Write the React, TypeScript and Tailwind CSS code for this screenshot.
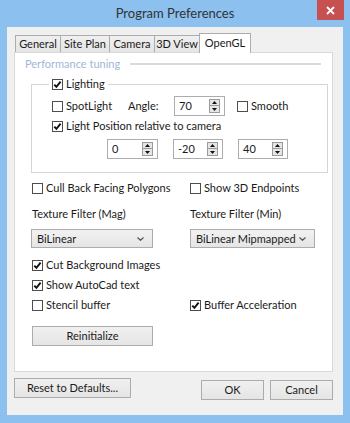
import React from 'react';

const Check = ({ checked }: { checked?: boolean }) => (
    <span className="w-[11px] h-[11px] shrink-0 border border-[#4d4d4d] bg-white flex items-center justify-center">
        {checked && (
            <svg width="9" height="9" viewBox="0 0 9 9">
                <path d="M1.3 4.6 L3.4 6.9 L7.6 1.6" fill="none" stroke="#111" strokeWidth="1.9" />
            </svg>
        )}
    </span>
);

const CheckRow = ({ label, checked, className = '' }: { label: string; checked?: boolean; className?: string }) => (
    <div className={`flex items-center gap-[3px] h-[14px] ${className}`}>
        <Check checked={checked} />
        <span className="leading-[14px] whitespace-nowrap">{label}</span>
    </div>
);

const Spin = ({ value, w }: { value: string; w: string }) => (
    <div className={`${w} h-[20px] border border-[#abadb3] bg-white flex items-center pl-[4px] pr-[4px]`}>
        <span className="flex-1 leading-[14px]">{value}</span>
        <div className="w-[11px] h-[14px] flex flex-col">
            <div className="h-[7px] border border-[#9a9a9a] bg-[#e6e6e6] flex items-center justify-center">
                <svg width="5" height="3" viewBox="0 0 5 3"><path d="M0 3 L2.5 0 L5 3 Z" fill="#111" /></svg>
            </div>
            <div className="h-[7px] border border-t-0 border-[#9a9a9a] bg-[#e6e6e6] flex items-center justify-center">
                <svg width="5" height="3" viewBox="0 0 5 3"><path d="M0 0 L2.5 3 L5 0 Z" fill="#111" /></svg>
            </div>
        </div>
    </div>
);

const Select = ({ value, w }: { value: string; w: string }) => (
    <div className={`${w} h-[19px] border border-[#acacac] bg-gradient-to-b from-[#f2f2f2] to-[#e5e5e5] flex items-center pl-[5px] pr-[8px]`}>
        <span className="flex-1 leading-[14px] whitespace-nowrap">{value}</span>
        <svg width="7" height="4" viewBox="0 0 7 4">
            <path d="M0.5 0.5 L3.5 3.3 L6.5 0.5" fill="none" stroke="#555" strokeWidth="1.2" />
        </svg>
    </div>
);

const Button = ({ label, className = '' }: { label: string; className?: string }) => (
    <div className={`h-[20px] border border-[#acacac] bg-gradient-to-b from-[#f0f0f0] to-[#e5e5e5] flex items-center justify-center leading-[14px] ${className}`}>
        {label}
    </div>
);

const tabs = [
    { name: 'General', w: 'w-[46px]' },
    { name: 'Site Plan', w: 'w-[50px]' },
    { name: 'Camera', w: 'w-[46px]' },
    { name: '3D View', w: 'w-[46px]' },
];

export default function App() {
    return (
        <div className="w-[350px] h-[423px] bg-[#8bc0ef] flex flex-col font-['Lato',sans-serif] text-[11px] text-[#1a1a1a]">
            {/* title bar */}
            <div className="h-[27px] grid grid-cols-[1fr_auto_1fr] items-start">
                <div />
                <div className="text-[13px] leading-[27px] text-[#333]">Program Preferences</div>
                <div className="justify-self-end mr-[6px] w-[27px] h-[20px] bg-[#c75050] flex items-center justify-center">
                    <svg width="9" height="9" viewBox="0 0 9 9">
                        <path d="M1 1 L8 8 M8 1 L1 8" stroke="#fff" strokeWidth="1.8" />
                    </svg>
                </div>
            </div>

            {/* client area */}
            <div className="mx-[7px] h-[388px] bg-[#f0f0f0] pl-[7px] pr-[10px] pt-[6px]">
                {/* tabs */}
                <div className="h-[19px] flex items-end pl-[1px]">
                    {tabs.map((t) => (
                        <div
                            key={t.name}
                            className={`${t.w} h-[17px] -mr-px border border-b-0 border-[#acacac] bg-gradient-to-b from-[#f0f0f0] to-[#e5e5e5] flex items-center justify-center leading-[14px] whitespace-nowrap`}
                        >
                            {t.name}
                        </div>
                    ))}
                    <div className="w-[52px] h-[20px] -mb-px relative z-10 border border-b-0 border-[#acacac] bg-white flex items-center justify-center leading-[14px] pb-[1px]">
                        OpenGL
                    </div>
                </div>

                {/* panel */}
                <div className="w-[319px] h-[320px] border border-[#d9d9d9] bg-white flex flex-col">
                    <div className="mt-[4px] h-[14px] pl-[10px] pr-[11px] flex items-center gap-[10px]">
                        <span className="leading-[14px] text-[#9fb7d6] whitespace-nowrap">Performance tuning</span>
                        <div className="flex-1 h-[2px] bg-[#dadada]" />
                    </div>

                    <fieldset className="mt-[6px] ml-[16px] mr-[4px] border border-[#d5d5d5] pb-[13px]">
                        <legend className="ml-[17px] px-[3px]">
                            <CheckRow label="Lighting" checked />
                        </legend>
                        <div className="mt-[5px] h-[20px] flex items-center pl-[20px]">
                            <CheckRow label="SpotLight" className="w-[76px]" />
                            <span className="w-[46px] leading-[14px]">Angle:</span>
                            <Spin value="70" w="w-[51px]" />
                            <CheckRow label="Smooth" className="ml-[12px]" />
                        </div>
                        <div className="h-[20px] flex items-center pl-[20px]">
                            <CheckRow label="Light Position relative to camera" checked />
                        </div>
                        <div className="mt-[3px] flex items-center pl-[75px] gap-[15px]">
                            <Spin value="0" w="w-[51px]" />
                            <Spin value="-20" w="w-[50px]" />
                            <Spin value="40" w="w-[50px]" />
                        </div>
                    </fieldset>

                    <div className="pl-[17px] grid grid-cols-[158px_1fr]">
                        <CheckRow label="Cull Back Facing Polygons" className="mt-[8px]" />
                        <CheckRow label="Show 3D Endpoints" className="mt-[8px]" />

                        <div className="mt-[12px] h-[14px] leading-[14px]">Texture Filter (Mag)</div>
                        <div className="mt-[12px] h-[14px] leading-[14px]">Texture Filter (Min)</div>

                        <div className="mt-[8px] -ml-px">
                            <Select value="BiLinear" w="w-[122px]" />
                        </div>
                        <div className="mt-[8px]">
                            <Select value="BiLinear Mipmapped" w="w-[125px]" />
                        </div>

                        <CheckRow label="Cut Background Images" checked className="mt-[10px] col-span-2" />
                        <CheckRow label="Show AutoCad text" checked className="mt-[6px] col-span-2" />
                        <CheckRow label="Stencil buffer" className="mt-[6px]" />
                        <CheckRow label="Buffer Acceleration" checked className="mt-[6px]" />

                        <Button label="Reinitialize" className="mt-[14px] w-[121px]" />
                    </div>
                </div>

                {/* bottom buttons */}
                <div className="mt-[6px] flex items-start">
                    <Button label="Reset to Defaults..." className="w-[117px]" />
                    <Button label="OK" className="ml-auto mt-[2px] w-[63px]" />
                    <Button label="Cancel" className="ml-[6px] mt-[2px] w-[63px]" />
                </div>
            </div>
        </div>
    );
}
